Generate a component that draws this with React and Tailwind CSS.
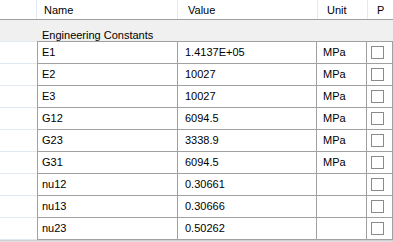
import React from 'react';

const rows = [
  { name: 'E1', value: '1.4137E+05', unit: 'MPa' },
  { name: 'E2', value: '10027', unit: 'MPa' },
  { name: 'E3', value: '10027', unit: 'MPa' },
  { name: 'G12', value: '6094.5', unit: 'MPa' },
  { name: 'G23', value: '3338.9', unit: 'MPa' },
  { name: 'G31', value: '6094.5', unit: 'MPa' },
  { name: 'nu12', value: '0.30661', unit: '' },
  { name: 'nu13', value: '0.30666', unit: '' },
  { name: 'nu23', value: '0.50262', unit: '' },
];

export default function App() {
  return (
    <div className="w-[393px] h-[242px] bg-white text-[11px] leading-none text-black overflow-hidden" style={{ fontFamily: '"Liberation Sans", Arial, sans-serif' }}>
      {/* header */}
      <div className="flex h-[20px] border-b border-[#a0a0a0] bg-white">
        <div className="w-[37px] border-r border-[#e3e9f2]" />
        <div className="w-[141px] border-r border-[#e3e9f2] pl-[7px] pt-[5px]">Name</div>
        <div className="w-[140px] border-r border-[#e3e9f2] pl-[10px] pt-[5px]">Value</div>
        <div className="w-[50px] border-r border-[#e3e9f2] pl-[9px] pt-[5px]">Unit</div>
        <div className="w-[24px] pl-[9px] pt-[5px]">P</div>
      </div>

      {/* group */}
      <div className="h-[21px] bg-[#f0f0f0] pl-[42px] pt-[10px]">Engineering Constants</div>

      {/* data rows */}
      <div className="flex flex-col">
        {rows.map((r, i) => {
          const last = i === rows.length - 1;
          return (
            <div key={r.name} className={`flex ${last ? 'h-[23px]' : 'h-[22px]'}`}>
              <div className={`w-[37px] border-t border-[#e3e9f2] bg-white ${last ? 'border-b' : ''}`} />
              <div className={`flex flex-1 border-t border-l border-r border-[#a0a0a0] ${last ? 'border-b' : ''}`}>
                <div className="w-[140px] border-r border-[#a0a0a0] pl-[4px] flex items-center">{r.name}</div>
                <div className="w-[139px] border-r border-[#a0a0a0] pl-[7px] flex items-center">{r.value}</div>
                <div className="w-[50px] border-r border-[#a0a0a0] pl-[6px] flex items-center">{r.unit}</div>
                <div className="flex-1 flex items-center pl-[4px]">
                  <div className="w-[13px] h-[13px] border border-[#8a8a8a] bg-white" />
                </div>
              </div>
            </div>
          );
        })}
      </div>
      <div className="h-[2px] bg-gradient-to-b from-[#c8c8c8] to-[#e8e8e8]" />
    </div>
  );
}
